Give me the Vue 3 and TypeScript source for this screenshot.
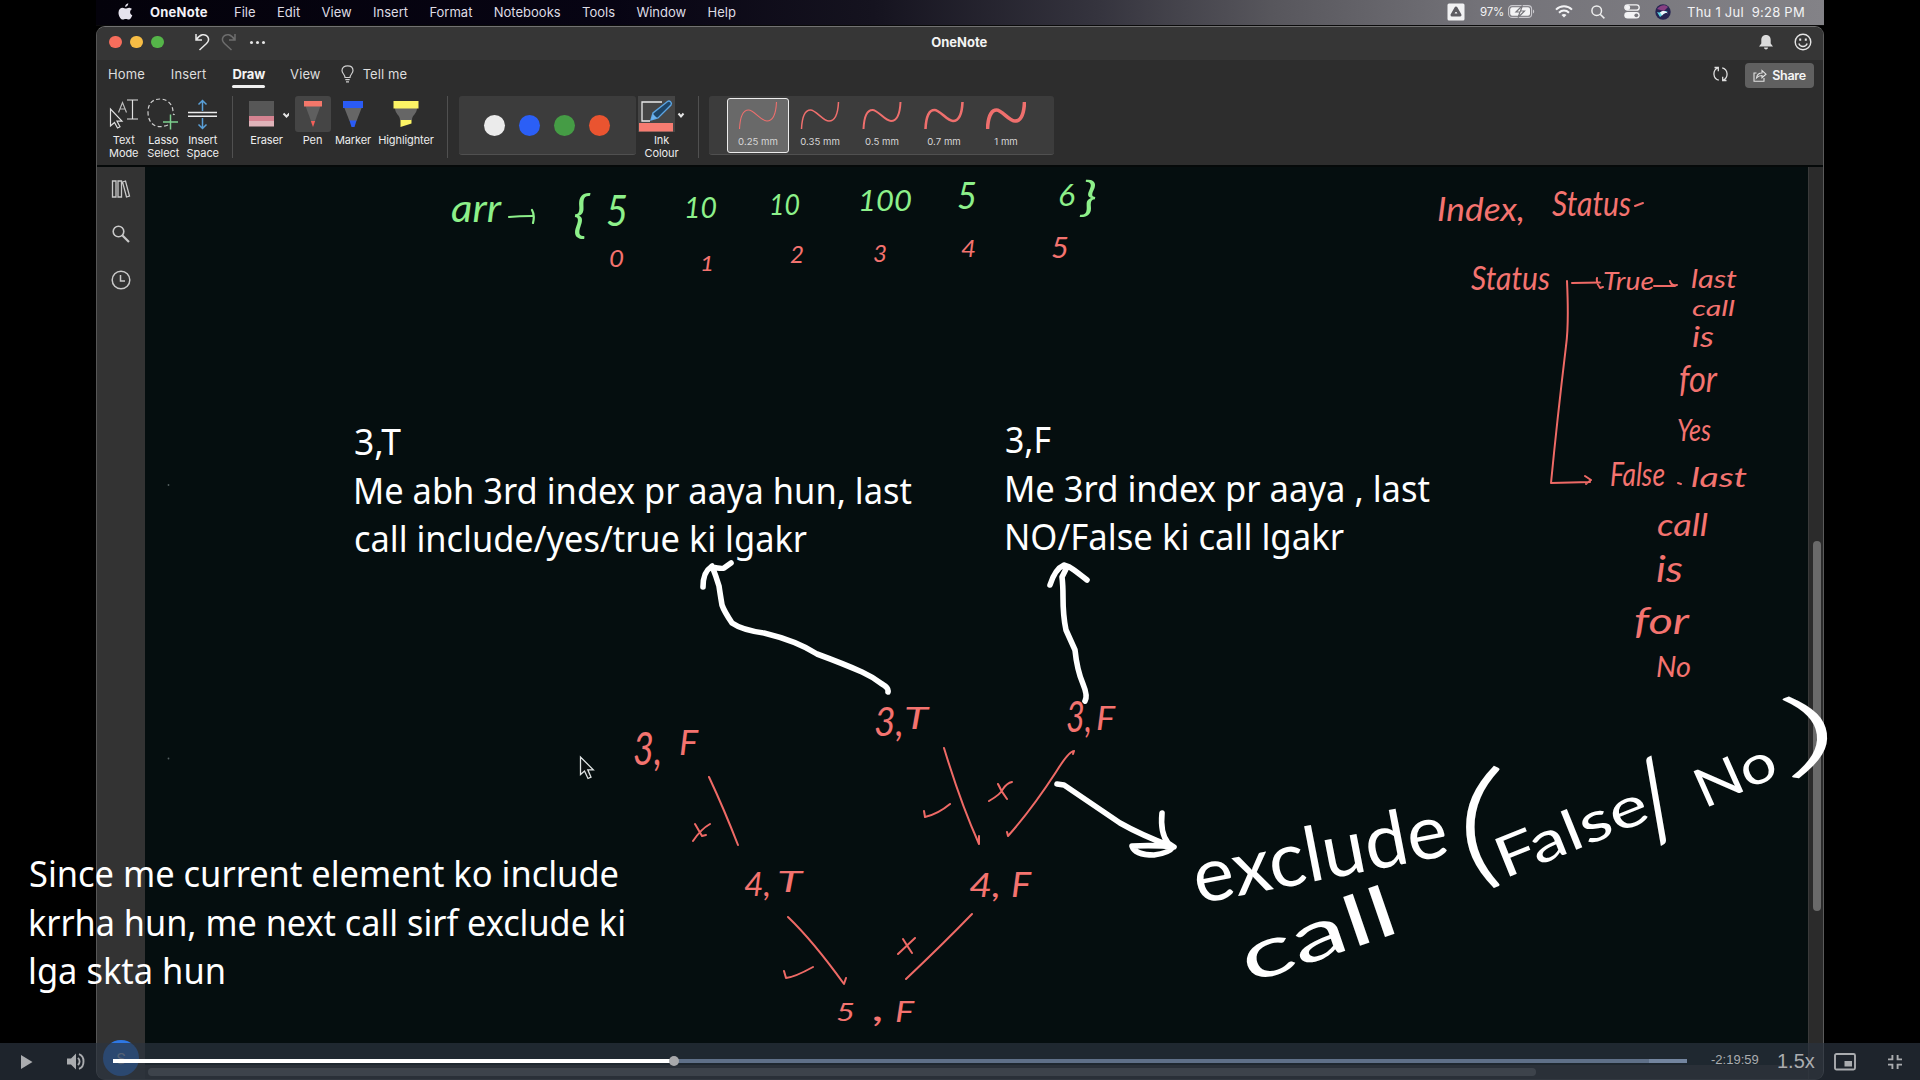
<script setup lang="ts">
interface Note {
  t: string
  x: number
  y: number
  w: number
  s: number
  r?: number
  light?: boolean
}

const menus: string[] = ['File', 'Edit', 'View', 'Insert', 'Format', 'Notebooks', 'Tools', 'Window', 'Help']
const swatches: string[] = ['#ebebeb', '#2b5ff6', '#459c45', '#ea5430']
const nibs = [
  { label: '0.25 mm', w: 1.1 },
  { label: '0.35 mm', w: 1.5 },
  { label: '0.5 mm', w: 2 },
  { label: '0.7 mm', w: 2.6 },
  { label: '1 mm', w: 3.6 },
]

const green: Note[] = [
  { t: 'arr', x: 451, y: 222, w: 50, s: 38 },
  { t: '{', x: 573, y: 232, w: 16, s: 50 },
  { t: '5', x: 606, y: 226, w: 22, s: 43 },
  { t: '10', x: 684, y: 218, w: 33, s: 28 },
  { t: '10', x: 769, y: 215, w: 31, s: 28 },
  { t: '100', x: 858, y: 211, w: 54, s: 28 },
  { t: '5', x: 957, y: 209, w: 20, s: 37 },
  { t: '6', x: 1058, y: 206, w: 17, s: 31 },
  { t: '}', x: 1081, y: 211, w: 16, s: 41 },
]

const red: Note[] = [
  { t: '0', x: 609, y: 267, w: 15, s: 24 },
  { t: '1', x: 700, y: 271, w: 14, s: 22 },
  { t: '2', x: 790, y: 263, w: 14, s: 23 },
  { t: '3', x: 873, y: 262, w: 14, s: 24 },
  { t: '4', x: 961, y: 257, w: 15, s: 23 },
  { t: '5', x: 1051, y: 258, w: 18, s: 29 },
  { t: 'Index,', x: 1437, y: 221, w: 88, s: 33 },
  { t: 'Status', x: 1552, y: 216, w: 79, s: 34 },
  { t: 'Status', x: 1471, y: 290, w: 79, s: 32 },
  { t: 'True', x: 1603, y: 290, w: 51, s: 26 },
  { t: 'last', x: 1691, y: 288, w: 46, s: 25 },
  { t: 'call', x: 1692, y: 316, w: 43, s: 22 },
  { t: 'is', x: 1692, y: 347, w: 22, s: 29 },
  { t: 'for', x: 1679, y: 392, w: 38, s: 36 },
  { t: 'Yes', x: 1677, y: 441, w: 34, s: 31 },
  { t: 'False', x: 1610, y: 486, w: 55, s: 33 },
  { t: 'last', x: 1691, y: 487, w: 56, s: 27 },
  { t: 'call', x: 1657, y: 536, w: 51, s: 31 },
  { t: 'is', x: 1656, y: 582, w: 27, s: 37 },
  { t: 'for', x: 1634, y: 634, w: 55, s: 36 },
  { t: 'No', x: 1656, y: 677, w: 35, s: 28 },
  { t: '3,', x: 633, y: 765, w: 29, s: 46 },
  { t: 'F', x: 679, y: 755, w: 19, s: 35 },
  { t: '3,', x: 874, y: 736, w: 30, s: 41 },
  { t: 'T', x: 904, y: 729, w: 24, s: 30 },
  { t: '3,', x: 1066, y: 732, w: 26, s: 42 },
  { t: 'F', x: 1096, y: 730, w: 19, s: 32 },
  { t: '4,', x: 744, y: 896, w: 27, s: 33 },
  { t: 'T', x: 777, y: 892, w: 25, s: 29 },
  { t: '4,', x: 969, y: 897, w: 32, s: 32 },
  { t: 'F', x: 1011, y: 897, w: 20, s: 35 },
  { t: '5', x: 836, y: 1021, w: 19, s: 25 },
  { t: ',', x: 873, y: 1021, w: 12, s: 38 },
  { t: 'F', x: 895, y: 1022, w: 19, s: 29 },
]

const white: Note[] = [
  { t: 'exclude', x: 1198, y: 904, w: 258, s: 76, r: -11 },
  { t: '(', x: 1455, y: 870, w: 52, s: 136, r: 0, light: true },
  { t: 'False', x: 1504, y: 879, w: 160, s: 56, r: -22 },
  { t: '/', x: 1656, y: 843, w: 40, s: 108, r: -28 },
  { t: 'No', x: 1704, y: 809, w: 84, s: 54, r: -24 },
  { t: ')', x: 1782, y: 768, w: 62, s: 92, r: -7, light: true },
  { t: 'call', x: 1249, y: 984, w: 162, s: 70, r: -19 },
]

const typed: Note[] = [
  { t: '3,T', x: 354, y: 455, w: 47, s: 36.5 },
  { t: 'Me abh 3rd index pr aaya hun, last', x: 353, y: 504, w: 559, s: 36.5 },
  { t: 'call include/yes/true ki lgakr', x: 354, y: 552, w: 453, s: 36.5 },
  { t: '3,F', x: 1005, y: 453, w: 46, s: 36.5 },
  { t: 'Me 3rd index pr aaya , last', x: 1004, y: 502, w: 426, s: 36.5 },
  { t: 'NO/False ki call lgakr', x: 1004, y: 550, w: 340, s: 36.5 },
  { t: 'Since me current element ko include', x: 29, y: 887, w: 590, s: 36.5 },
  { t: 'krrha hun, me next call sirf exclude ki', x: 28, y: 936, w: 598, s: 36.5 },
  { t: 'lga skta hun', x: 28, y: 984, w: 198, s: 36.5 },
]

const spin = (n: Note): string => `rotate(${n.r ?? 0} ${n.x} ${n.y})`
</script>

<template>
  <div class="screen">
    <div class="desktop">
      <header class="menubar">
        <svg class="apple" width="15" height="18" viewBox="0 0 15 18"><path d="M10.3 0.3c.1 1.9-1.4 3.5-3.1 3.6C7 2.200 8.500.5 10.300.3zM13.900 6.100c-2.600 1.700-2.200 5 .4 6.200-.7 2-2 4.300-3.600 4.300-1.100 0-1.500-.7-2.900-.7s-1.800.7-2.900.7C2.500 16.600.5 12.700.5 9.700c0-3.200 2-5 4.100-5 1.300 0 2.200.8 3.100.8s2-.9 3.700-.8c1 .1 1.900.5 2.500 1.400z" fill="#e6e3ee" /></svg>
        <b class="app">OneNote</b>
        <nav class="menus"><span v-for="m in menus" :key="m">{{ m }}</span></nav>
        <div class="status">
          <svg width="18" height="18" viewBox="0 0 18 18"><rect x="0.500" y="0.500" width="17" height="17" rx="1.500" fill="#f1f1f3" /><path d="M9 5l4 7H5z" fill="none" stroke="#5d5c62" stroke-width="3" stroke-linejoin="round" /></svg>
          <span class="pct">97%</span>
          <svg class="batt" width="27" height="13" viewBox="0 0 27 13"><rect x="0.600" y="0.600" width="23" height="11.800" rx="3.500" fill="none" stroke="#c9c8cd" stroke-width="1.100" /><rect x="2.200" y="2.200" width="19.800" height="8.600" rx="2" fill="#f3f3f5" /><path d="M25 4.500v4c1.600-.6 1.600-3.400 0-4z" fill="#c9c8cd" /><path d="M14.500.5L8 7h4l-2 5.500L16.500 6h-4z" fill="#f8f8f8" stroke="#77767c" stroke-width="1.200" /></svg>
          <svg class="wifi" width="18" height="13" viewBox="0 0 18 13" fill="none" stroke="#f3f3f5" stroke-width="2"><path d="M1 4.600c4.500-4.400 11.500-4.400 16 0M4 7.700c2.900-2.800 7.100-2.800 10 0" /><path d="M9 12.500L6.500 9.900c1.500-1.300 3.500-1.300 5 0z" fill="#f3f3f5" stroke="none" /></svg>
          <svg class="find" width="14" height="14" viewBox="0 0 14 14" fill="none" stroke="#eee" stroke-width="1.500"><circle cx="5.700" cy="5.700" r="4.800" /><path d="M9.200 9.200l4.200 4.200" /></svg>
          <svg class="cc" width="16" height="15" viewBox="0 0 16 15"><rect x="0.800" y="0.800" width="14.400" height="5.400" rx="2.700" fill="none" stroke="#f3f3f5" stroke-width="1.300" /><circle cx="3.600" cy="3.500" r="2.500" fill="#f3f3f5" /><rect x="0.300" y="8" width="15.400" height="6.600" rx="3.300" fill="#f3f3f5" /><circle cx="12.300" cy="11.300" r="1.900" fill="#77767c" /></svg>
          <svg class="siri" width="16" height="16" viewBox="0 0 16 16"><circle cx="8" cy="8" r="7.700" fill="#262452" /><path d="M2 5c3-4 8-5 11-2l-4 4z" fill="#a0468f" opacity=".8" /><path d="M2 8c4 2 6-3 11 0-3 0-4 2-8 5z" fill="#5ad0df" /><path d="M5 8.500c3-2 5-2 8 1-3-1-4 0-6 2z" fill="#ecf4fb" /></svg>
          <span class="clock">Thu 1 Jul&nbsp; 9:28 PM</span>
        </div>
      </header>

      <section class="window">
        <div class="titlebar">
          <div class="lights"><i class="r"></i><i class="y"></i><i class="g"></i></div>
          <svg class="undo" width="66" height="18" viewBox="0 0 66 18" fill="none" stroke-width="1.500"><path d="M1 1v6h6M1.500 6.500C5 1 10 .5 12.500 3.500c2 2.600 1 5-1 7L4.500 17" stroke="#e8e8e8" /><path d="M40 1v6h-6M39.500 6.500C36 1 31 .5 28.500 3.500c-2 2.600-1 5 1 7l7 6.500" stroke="#6d6d6d" /></svg>
          <span class="dots"><i></i><i></i><i></i></span>
          <b class="title">OneNote</b>
          <svg class="bell" width="16" height="17" viewBox="0 0 16 17"><path d="M8 1c3.200 0 4.700 2.200 4.700 5v3.500l2.300 3H1l2.300-3V6C3.300 3.200 4.800 1 8 1zM6 13.500h4c0 2.600-4 2.600-4 0z" fill="#dcdcdc" /></svg>
          <svg class="smile" width="18" height="18" viewBox="0 0 18 18" fill="none" stroke="#e4e4e4" stroke-width="1.400"><circle cx="9" cy="9" r="7.800" /><path d="M4.800 10.500c1.500 4 6.900 4 8.400 0" /><path d="M6.200 5.500v2.200M11.800 5.500v2.200" stroke-width="2" /></svg>
        </div>

        <div class="tabs">
          <span>Home</span><span>Insert</span><span class="on">Draw</span><span>View</span>
          <svg class="bulb" width="13" height="18" viewBox="0 0 13 18" fill="none" stroke="#d0d0d0" stroke-width="1.200"><path d="M4 12.500C4 9.500 1 8.500 1 5.500 1 2.500 3.500.8 6.500.8S12 2.500 12 5.500c0 3-3 4-3 7zM4.300 14.700h4.400M5 16.800h3" /></svg>
          <span class="tell">Tell me</span>
          <svg class="sync" width="15" height="16" viewBox="0 0 15 16" fill="none" stroke="#dedede" stroke-width="1.300"><path d="M5.800 14.200C-.2 12.800-.6 4.500 4.500 2M1.500 1.500h3.800v3.800M9.200 1.800c6 1.400 6.400 9.700 1.300 12.200M13.500 14.500H9.700v-3.800" /></svg>
          <button class="share"><svg width="14" height="13" viewBox="0 0 14 13" fill="none" stroke="#e2e2e2" stroke-width="1.100"><path d="M3.500 4H1v8.300h10V9M3.500 9c.5-3.500 2.500-5 5.500-5V1.500L13 5.200 9 8.700V6.500C6.500 6.500 5 7.200 3.500 9z" /></svg>Share</button>
        </div>

        <div class="ribbon">
          <div class="tool w39"><div class="pic"><svg width="30" height="31" viewBox="0 0 30 31" fill="none" stroke="#e0e0e0" stroke-width="1.200"><path d="M1.500 10v17l4-3.500 3 5.500 2.500-1.300-3-5.500h5z" /><path d="M9.500 13.500l4-10 4 10M11 10h5" stroke="#bbb" /><path d="M18 1h11M23.500 1v19M18 20h11" /></svg></div><span>Text<br>Mode</span></div>
          <div class="tool w39"><div class="pic"><svg width="32" height="32" viewBox="0 0 32 32" fill="none" stroke="#cfcfcf" stroke-width="1.200"><path d="M21 27C8 32 1 25 1 14 1 5 6 1 13 1s13 5 13 13c0 3 1 2 1.500 3" stroke-dasharray="4 2.500" /><path d="M23.500 16.500v15M16 24h15" stroke="#7ccf8e" stroke-width="1.500" /></svg></div><span>Lasso<br>Select</span></div>
          <div class="tool w39"><div class="pic"><svg width="29" height="31" viewBox="0 0 29 31" fill="none" stroke="#5aa0d8" stroke-width="1.500"><path d="M14.500 12V1.500M10.500 5.500l4-4 4 4M14.500 19v10.500M10.500 25.500l4 4 4-4" /><path d="M0 13.600h29M0 17.300h29" stroke="#ededed" /></svg></div><span>Insert<br>Space</span></div>
          <i class="sep s1"></i>
          <div class="tool w44"><div class="pic"><svg width="44" height="30" viewBox="0 0 44 30"><path d="M4 2h25v15H4z" fill="#575757" /><path d="M4 17h25v5H4z" fill="#d58391" /><path d="M4 22h25v5.500H4z" fill="#dfb3b9" /><path d="M38.500 14.500l3 3 3-3" fill="none" stroke="#e5e5e5" stroke-width="2" /></svg></div><span>Eraser</span></div>
          <div class="tool pen"><div class="pic on"><svg width="20" height="30" viewBox="0 0 20 30"><path d="M2.500 7h15L12 22H8z" fill="#5f5f5f" /><path d="M1 2h18v5.500H1z" fill="#f4776a" /><path d="M7.800 22h4.400L10 28z" fill="#f4605a" /></svg></div><span>Pen</span></div>
          <div class="tool w45"><div class="pic"><svg width="20" height="30" viewBox="0 0 20 30"><path d="M1 8h18l-5.500 14h-7z" fill="#666" /><path d="M0 2h20v7H0z" fill="#2a5bf5" /><path d="M6.500 21.500h7L11.500 28h-3z" fill="#2a5bf5" /></svg></div><span>Marker</span></div>
          <div class="tool w61"><div class="pic"><svg width="26" height="30" viewBox="0 0 26 30"><path d="M2 9h22c0 6-5 7-5 12H7C7 16 2 15 2 9z" fill="#666" /><path d="M.5 2h25v7.500H.5z" fill="#fcf465" /><path d="M7.500 21h11v3.500L7.500 28z" fill="#fcf465" /></svg></div><span>Highlighter</span></div>
          <i class="sep s2"></i>
          <div class="swatches"><i v-for="c in swatches" :key="c" :style="{ background: c }"></i></div>
          <div class="tool inkc"><div class="pic"><svg width="48" height="36" viewBox="0 0 48 36"><path d="M0 0h37v36H0z" fill="#454545" /><path d="M12 25H4V6h20" fill="none" stroke="#e9e9e9" stroke-width="1.300" /><path d="M13 24l2-7L29.500 5.500c2-1.500 5 1 3.500 3.500L20 22z" fill="#1d4568" stroke="#5ba4e2" stroke-width="1.400" /><path d="M13 24l2-6 4 4z" fill="#6bb2ef" /><path d="M1 27h34v8.500H1z" fill="#f67c71" /><path d="M40.500 17.500l2.500 3 2.500-3" fill="none" stroke="#e5e5e5" stroke-width="2" /></svg></div><span>Ink<br>Colour</span></div>
          <i class="sep s3"></i>
          <div class="nibs">
            <div v-for="(n, i) in nibs" :key="n.label" class="nib" :class="{ sel: i === 0 }">
              <svg width="40" height="30" viewBox="0 0 40 30" fill="none" stroke="#ef6f6d" :stroke-width="n.w"><path d="M1.500 29C2 18 5 10 10.500 10S23 21 29 21s9-8 9.500-19" /></svg>
              <span>{{ n.label }}</span>
            </div>
          </div>
        </div>

        <div class="body">
          <aside class="side">
            <svg width="20" height="18" viewBox="0 0 20 18" fill="none" stroke="#c9c9c9" stroke-width="1.300"><path d="M1.500 1h3.500v16H1.500zM7 1h3.500v16H7zM11.500 2l3-1 4 15-3 1z" /></svg>
            <svg width="18" height="18" viewBox="0 0 18 18" fill="none" stroke="#c9c9c9" stroke-width="1.600"><circle cx="6.500" cy="6.500" r="5.300" /><path d="M10.500 10.500l6.500 6.500" stroke-width="2.200" /></svg>
            <svg width="20" height="20" viewBox="0 0 20 20" fill="none" stroke="#c9c9c9" stroke-width="1.500"><circle cx="10" cy="10" r="8.800" /><path d="M9.500 5v6h4.500" /></svg>
            <span class="avatar">S</span>
          </aside>
          <main class="page"><div class="hbar"><i></i></div></main>
          <div class="vbar"><i></i></div>
        </div>
      </section>
    </div>

    <svg class="ink" width="1920" height="1080" viewBox="0 0 1920 1080">
      <g class="hand green">
        <text v-for="(n, i) in green" :key="i" :x="n.x" :y="n.y" :font-size="n.s" :textLength="n.w" lengthAdjust="spacingAndGlyphs">{{ n.t }}</text>
        <path d="M509 217q10-1 23-1M532 210q3 5 1 13" />
      </g>
      <g class="hand red">
        <text v-for="(n, i) in red" :key="i" :x="n.x" :y="n.y" :font-size="n.s" :textLength="n.w" lengthAdjust="spacingAndGlyphs">{{ n.t }}</text>
        <path d="M1635 206l8-3M1572 283l28-.500M1597 278q-1 5 3 10l3-1M1567 281q2 44-1 65-9 75-15 137l39-1M1585 476l6 4-5 4M1654 286h21M1670 281q1 5 7 4M1678 483l3 1" />
        <path d="M709 777q15 32 29 68M944 748q17 56 35 96v-8M1074 751q-5 0-18 21-24 37-48 64l-1-4M1074 751l-1 3M788 917q25 24 56 67l2-6M972 914q-28 29-66 65" />
        <path d="M693 841q8-12 17-17M695 824l7 12 4-1M989 801q12-7 14-12 4-6 9-7M998 784q3 7 9 15M898 954l17-16M903 939q3 5 9 14M924 811l1 6q13-3 25-13M784 971l2 7q9-1 27-11" />
      </g>
      <g class="hand white">
        <text v-for="n in white" :key="n.t" :class="{ light: n.light }" :x="n.x" :y="n.y" :font-size="n.s" :textLength="n.w" lengthAdjust="spacingAndGlyphs" :transform="spin(n)">{{ n.t }}</text>
        <path d="M888 692q1-4-6-8-9-7-20-12-18-8-45-18-20-13-53-21-22-3-32-10-8-12-10-18-2-12-3-19-3-10-7-20M703 587q0-15 8-20 11 2 13 1l7-5" />
        <path d="M1085 701q3-5-2-17-6-14-8-34l-9-20q-3-14-3-33 0-12-1-20l4-8M1050 585q5-16 14-20 5 1 10 5 8 6 13 10" />
        <path d="M1057 784l7 1q37 25 56 38 21 12 53 24M1162 813q-2 20 6 30l6 4q-16-2-42-1 3 9 22 9 15-2 19-8" />
      </g>
      <g class="typed">
        <text v-for="n in typed" :key="n.t" :x="n.x" :y="n.y" :font-size="n.s" :textLength="n.w" lengthAdjust="spacingAndGlyphs">{{ n.t }}</text>
      </g>
      <path d="M580.500 757v17.500l4-3.500 3.500 7.500 3-1.300-3.200-7.400h5.500z" fill="#0b1011" stroke="#dfe3e3" stroke-width="1.300" />
      <circle cx="168.500" cy="485" r="0.900" fill="#555f60" /><circle cx="168.500" cy="758.500" r="0.900" fill="#555f60" />
    </svg>

    <footer class="player">
      <svg class="play" width="12" height="14" viewBox="0 0 12 14"><path d="M0 0l11.500 7L0 14z" fill="#aaacaf" /></svg>
      <svg class="vol" width="18" height="17" viewBox="0 0 18 17"><path d="M0 5.500h4l5-5v16l-5-5H0z" fill="#aaacaf" /><path d="M10.800 5c2.400 1.400 2.400 5.600 0 7M12 1.200c6 2 6 12.600 0 14.600" fill="none" stroke="#aaacaf" stroke-width="1.900" /></svg>
      <div class="track"><i class="load"></i><i class="done"></i><i class="knob"></i></div>
      <span class="left">-2:19:59</span>
      <span class="rate">1.5x</span>
      <svg class="pip" width="22" height="18" viewBox="0 0 22 18"><rect x="1" y="1" width="20" height="15.500" rx="1.500" fill="none" stroke="#aaacaf" stroke-width="1.900" /><path d="M10.500 8h7.500v5.500h-7.500z" fill="#aaacaf" /></svg>
      <svg class="exit" width="14" height="14" viewBox="0 0 14 14" fill="none" stroke="#aaacaf" stroke-width="1.900"><path d="M0 4.400h4.400V0M9.600 0v4.400H14M0 9.600h4.400V14M9.600 14V9.600H14" /></svg>
    </footer>
  </div>
</template>

<style>
body { margin: 0; background: #000; overflow: hidden; }
</style>

<style scoped>
.screen { position: relative; width: 1920px; height: 1080px; background: #000; overflow: hidden; font-family: Inter, "Liberation Sans", sans-serif; color: #e4e4e4; }
.desktop { width: 1728px; height: 1080px; margin-left: 96px; display: flex; flex-direction: column; }
svg { flex: none; display: block; }

.menubar { height: 26px; flex: none; box-sizing: border-box; padding: 0 19px 2px 22px; display: flex; align-items: center; font-size: 13px; background: linear-gradient(90deg, #04020b 0%, #070413 30%, #15131f 45%, #35343e 58%, #57565c 68%, #737278 80%, #838287 100%); border-bottom: 1px solid #0a0a0a; white-space: nowrap; }
.app { margin-left: 17px; width: 84px; color: #f3f1f7; letter-spacing: .25px; }
.menus { display: flex; gap: 21.400px; color: #dedce4; }
.status { margin-left: auto; display: flex; align-items: center; color: #f3f3f5; }
.pct { margin-left: 15px; width: 28px; font-size: 11.500px; letter-spacing: -.2px; }
.wifi { margin-left: 20px; }
.find { margin-left: 18px; }
.cc { margin-left: 19px; }
.siri { margin-left: 15px; }
.clock { margin-left: 16px; font-size: 13px; width: 118px; letter-spacing: .25px; }

.window { flex: 1; box-sizing: border-box; height: 1054px; border: 1px solid #686868; border-color: #727272 #5b5b5b #444 #565656; border-radius: 9px; overflow: hidden; display: flex; flex-direction: column; background: #2d2d2d; }
.titlebar { height: 33px; flex: none; display: flex; align-items: center; background: #363636; box-sizing: border-box; padding: 0 11px 3px 12px; }
.lights { display: flex; gap: 8.500px; }
.lights i { width: 12.500px; height: 12.500px; border-radius: 50%; }
.r { background: #f66d5c; } .y { background: #f7bd45; } .g { background: #55b549; }
.undo { margin-left: 31px; width: 66px; }
.dots { display: flex; gap: 3px; margin-left: -11px; }
.dots i { width: 3px; height: 3px; border-radius: 50%; background: #e6e6e6; }
.title { flex: 1; text-align: center; font-size: 13px; color: #f3f3f3; padding-right: 104px; }
.bell { margin-right: 20px; }

.tabs { height: 36px; flex: none; display: flex; align-items: center; box-sizing: border-box; padding: 0 9px 9px 11px; font-size: 13px; color: #dedede; letter-spacing: .1px; }
.tabs span { margin-right: 26px; }
.tabs .on { font-weight: 700; color: #f4f4f4; position: relative; margin-right: 25px; letter-spacing: -.1px; }
.tabs .on::after { content: ""; position: absolute; left: 0; right: 0; bottom: -6px; height: 3px; border-radius: 2px; background: #efefef; }
.tabs .bulb { margin-left: -6px; margin-right: 9px; }
.tabs .sync { margin-left: auto; }
.share { margin: 3px 0 0 17px; width: 69px; height: 25px; padding: 0; border: 0; border-radius: 4px; background: #606060; color: #f5f5f5; font: 600 12.500px Inter, sans-serif; display: flex; align-items: center; justify-content: center; gap: 5px; letter-spacing: -.3px; }

.ribbon { height: 71px; flex: none; box-sizing: border-box; display: flex; align-items: flex-start; padding-left: 7px; border-bottom: 2px solid #050909; }
.tool { display: flex; flex-direction: column; align-items: center; font-size: 11px; line-height: 12.500px; text-align: center; color: #ececec; letter-spacing: -.1px; }
.tool span { margin-top: 2px; }
.pic { height: 36px; display: flex; align-items: center; justify-content: center; }
.pic.on { width: 36px; background: #454545; border-radius: 3px; }
.w39 { width: 39.500px; } .w44 { width: 44px; } .pen { width: 36px; margin-left: 6px; } .w45 { width: 45px; } .w61 { width: 61px; }
.sep { width: 1px; height: 62px; background: #505050; }
.s1 { margin: 0 12px 0 9px; } .s2 { margin: 0 11px 0 10px; } .s3 { margin: 0 10px 0 12px; }
.swatches { width: 177px; height: 59px; box-sizing: border-box; border-bottom: 1px solid #505050; border-radius: 3px; background: #3c3c3c; display: flex; align-items: center; justify-content: center; gap: 14px; }
.swatches i { width: 21px; height: 21px; border-radius: 50%; }
.inkc { width: 48px; margin-left: 2px; }
.nibs { width: 345px; height: 59px; box-sizing: border-box; padding-left: 18.500px; border-bottom: 1px solid #505050; border-radius: 3px; background: #3c3c3c; display: flex; align-items: center; }
.nib { width: 62px; height: 55px; box-sizing: border-box; border: 1px solid transparent; border-radius: 3px; display: flex; flex-direction: column; align-items: center; padding-top: 1px; font-size: 9.600px; line-height: 12px; color: #d7d7d7; white-space: nowrap; }
.nib span { margin-top: 6px; }
.nib.sel { background: #696969; border: 1.500px solid #ececec; }

.body { flex: 1; display: flex; min-height: 0; }
.side { width: 48px; flex: none; background: #333; display: flex; flex-direction: column; align-items: center; padding-top: 13px; box-sizing: border-box; }
.side svg { margin-bottom: 27px; }
.avatar { margin-top: auto; margin-bottom: 3px; width: 36px; height: 36px; border-radius: 50%; background: #2e78e4; color: #b6cdf0; display: flex; align-items: center; justify-content: center; font-size: 15px; }
.page { flex: 1; background: #050e0f; display: flex; flex-direction: column; justify-content: flex-end; }
.hbar { height: 14px; background: #2b2b2b; display: flex; align-items: center; padding-left: 3px; }
.hbar i { width: 1388px; height: 8px; border-radius: 4px; background: #696969; }
.vbar { width: 15px; flex: none; box-sizing: border-box; background: #2b2b2b; border-left: 1px solid #3a3a3a; padding: 374px 0 0 4px; }
.vbar i { display: block; width: 8px; height: 370px; border-radius: 4px; background: #6a6a6a; }

.ink { position: absolute; left: 0; top: 0; }
.hand { font-family: Lato, "Liberation Sans", sans-serif; }
.hand path { fill: none; stroke-linecap: round; stroke-linejoin: round; }
.green { fill: #8df08a; font-style: italic; }
.green path { stroke: #8df08a; stroke-width: 2.200; }
.red { fill: #f4736f; font-style: italic; }
.red path { stroke: #ef6a66; stroke-width: 2; }
.white { fill: #fff; }
.white .light { font-weight: 300; }
.white path { stroke: #fff; stroke-width: 5.600; }
.typed { fill: #fff; font-family: "Noto Sans", "Open Sans", sans-serif; }

.player { position: absolute; left: 0; right: 0; bottom: 0; height: 37px; display: flex; align-items: center; background: rgba(43, 51, 63, .7); font-family: "Liberation Sans", Arial, sans-serif; color: #aaacaf; }
.play { margin-left: 21px; }
.vol { margin-left: 34px; }
.track { position: relative; width: 1574px; height: 4px; margin-left: 28px; margin-top: -1px; background: #73859f; }
.track i { position: absolute; left: 0; top: 0; height: 100%; }
.track .load { width: 1536px; background: #5f7088; }
.track .done { width: 561px; background: #fff; }
.track .knob { left: 556px; top: -3px; width: 10px; height: 10px; border-radius: 50%; background: #a8a9ab; }
.left { margin-left: 24px; width: 66px; font-size: 13px; margin-top: -4px; }
.rate { width: 57px; font-size: 20px; }
.exit { margin-left: 32px; }
</style>
